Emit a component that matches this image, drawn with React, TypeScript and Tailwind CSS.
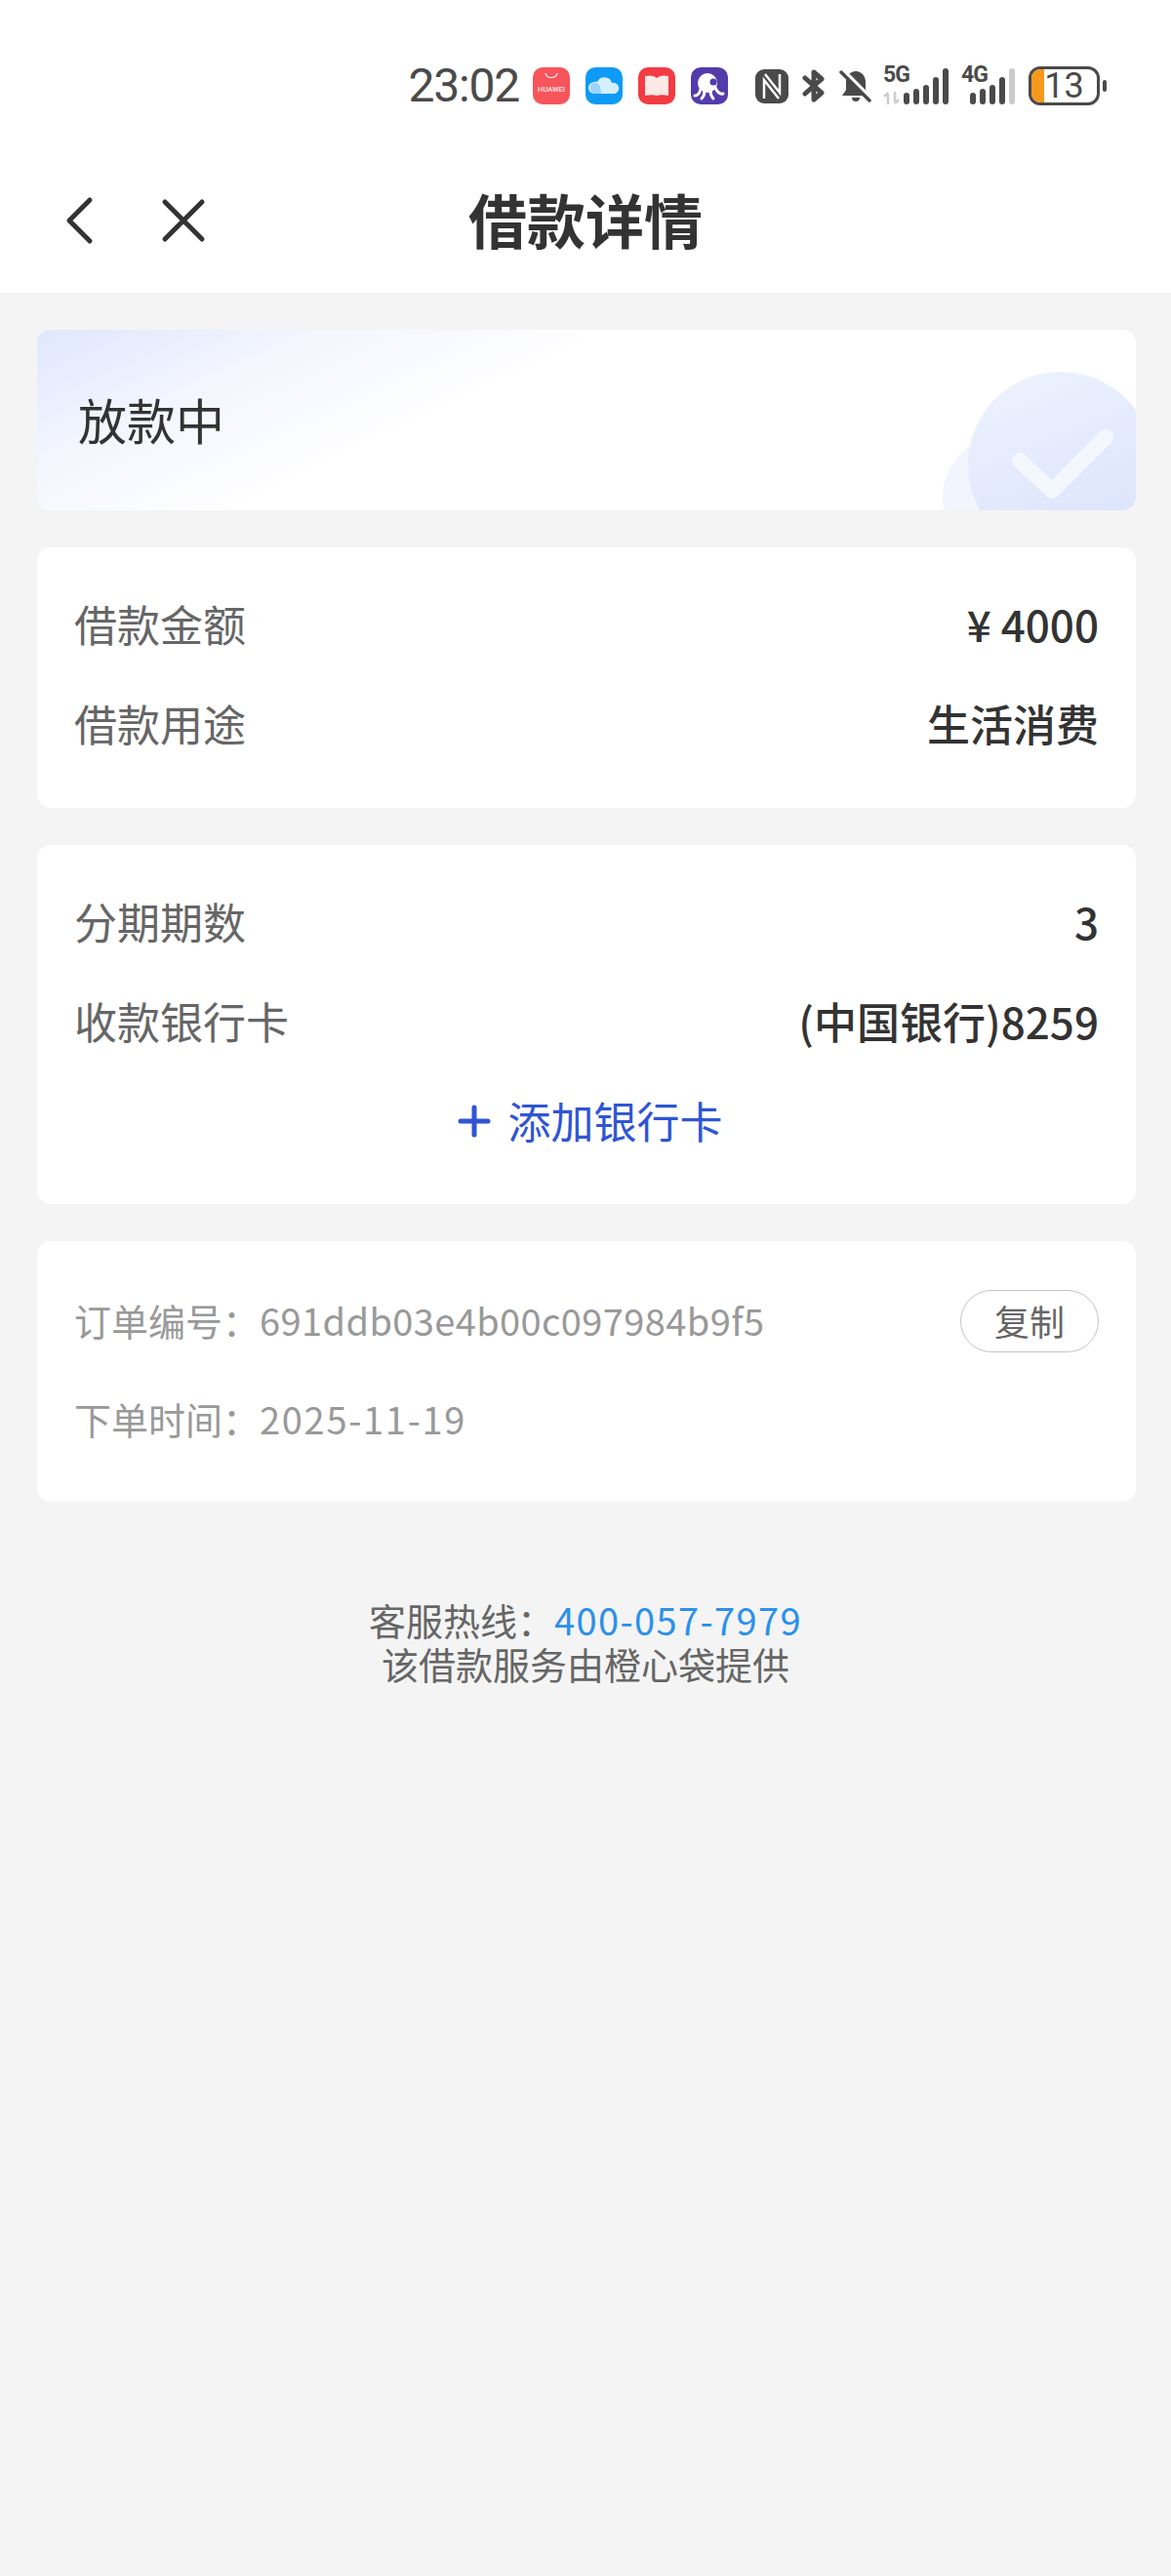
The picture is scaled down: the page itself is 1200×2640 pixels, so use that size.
import React from 'react'
import { Plus } from 'lucide-react'

const Row = ({ label, value, last }: { label: string; value: string; last?: boolean }) => (
  <div className={`flex items-center justify-between h-[61px] ${last ? '' : 'mb-[41px]'}`}>
    <span className="text-[44px] leading-[61px] text-[#666666]">{label}</span>
    <span className="text-[44px] leading-[61px] font-medium text-[#333333]">{value}</span>
  </div>
)

const Signal = ({ label, width, dim, arrows }: { label: string; width: string; dim?: boolean; arrows?: boolean }) => (
  <div className={`relative h-[38px] ${width}`}>
    <span className="absolute left-0 top-[-4px] text-[23px] leading-[24px] font-bold tracking-[-1px] font-['Roboto',sans-serif]">{label}</span>
    {arrows && (
      <svg className="absolute left-0 bottom-0" width="18" height="13" viewBox="0 0 18 13" fill="none" stroke="#cccccc" strokeWidth="2.5">
        <path d="M5 13V2M1 5l4-4" />
        <path d="M12 0v11M16 8l-4 4" />
      </svg>
    )}
    <div className="absolute right-0 bottom-0 flex items-end gap-[4px]">
      <i className="w-[6px] h-[12px] rounded-[3px] bg-[#4a4a4a]" />
      <i className="w-[6px] h-[16px] rounded-[3px] bg-[#4a4a4a]" />
      <i className="w-[6px] h-[20px] rounded-[3px] bg-[#4a4a4a]" />
      <i className="w-[6px] h-[28px] rounded-[3px] bg-[#4a4a4a]" />
      <i className={`w-[6px] h-[37px] rounded-[3px] ${dim ? 'bg-[#cccccc]' : 'bg-[#4a4a4a]'}`} />
    </div>
  </div>
)

const StatusBar = () => (
  <div className="h-[170px] pt-[69px] pr-[66px] flex justify-end items-start">
    <div className="flex items-center h-[38px] text-[#4a4a4a]">
      <span className="text-[48px] leading-[38px] tracking-[-1.2px] font-['Roboto',sans-serif]">23:02</span>
      {/* app notification icons */}
      <svg width="38" height="38" viewBox="0 0 38 38" className="ml-[14px]">
        <rect width="38" height="38" rx="10" fill="#f8545c" />
        <path d="M13 6c1 6 11 6 12 0" fill="none" stroke="#fff" strokeWidth="1.2" />
        <text x="19" y="25" textAnchor="middle" fontSize="7.5" fontWeight="500" fill="#ffe9e9" fontFamily="Roboto, sans-serif">HUAWEI</text>
      </svg>
      <svg width="38" height="38" viewBox="0 0 38 38" className="ml-[16px]">
        <rect width="38" height="38" rx="10" fill="#0f9bf5" />
        <path d="M9 27a6 6 0 0 1 0-12 3 3 0 0 1 3 0 8 8 0 0 1 15 1 5.5 5.5 0 0 1 3 11z" fill="#d4efff" />
        <path d="M9 27a6 6 0 0 1-1-11c3-1 6 1 7 4l1 7z" fill="#9bd4fb" />
      </svg>
      <svg width="38" height="38" viewBox="0 0 38 38" className="ml-[16px]">
        <rect width="38" height="38" rx="10" fill="#f23b42" />
        <path d="M7 9c4-1 9-1 12 2 3-3 8-3 12-2v20c-4-1-9-1-12 0-3-1-8-1-12 0z" fill="#fde8e6" />
      </svg>
      <svg width="38" height="38" viewBox="0 0 38 38" className="ml-[16px]">
        <rect width="38" height="38" rx="10" fill="#533bac" />
        <circle cx="17" cy="16" r="10" fill="#fff" />
        <path d="M10 22c-1 5-3 7-6 7M14 24c0 4-1 6-3 8M20 24c0 4 1 6 3 8M25 21c2 4 4 7 8 6" fill="none" stroke="#fff" strokeWidth="3" strokeLinecap="round" />
        <circle cx="23" cy="15" r="3.5" fill="#533bac" />
      </svg>
      {/* system icons */}
      <svg width="34" height="35" viewBox="0 0 34 35" className="ml-[28px]">
        <rect width="34" height="35" rx="9" fill="#4a4a4a" />
        <path d="M10 5l15 19V5M24 30L9 11v19" fill="none" stroke="#fff" strokeWidth="2.5" />
      </svg>
      <svg width="24" height="36" viewBox="0 0 24 36" className="ml-[14px]" fill="none" stroke="#4a4a4a" strokeWidth="5" strokeLinecap="round" strokeLinejoin="round">
        <path d="M3 10l17 15-8 7V22M12 14V4l8 7L3 26" />
      </svg>
      <svg width="33" height="35" viewBox="0 0 33 35" className="ml-[14px]">
        <path d="M17 2c6 0 10 5 10 11v8l4 6H3l4-6v-8c0-6 4-11 10-11z" fill="#4a4a4a" />
        <path d="M13 29a4 4 0 0 0 8 0z" fill="#4a4a4a" />
        <path d="M3 0l30 30" stroke="#fff" strokeWidth="4" />
        <path d="M2 3l29 29" stroke="#4a4a4a" strokeWidth="3.5" strokeLinecap="round" />
      </svg>
      <div className="ml-[12px]"><Signal label="5G" width="w-[67px]" arrows /></div>
      <div className="ml-[13px]"><Signal label="4G" width="w-[55px]" dim /></div>
      <div className="relative w-[73px] h-[40px] ml-[14px] rounded-[12px] border-[3px] border-[#4a4a4a] flex items-center justify-center">
        <div className="absolute left-0 top-0 bottom-0 w-[13px] rounded-l-[9px] bg-[#f7981d]" />
        <span className="relative text-[36px] leading-[34px] font-['Roboto',sans-serif]">13</span>
      </div>
      <div className="w-[4px] h-[12px] ml-[3px] rounded-full bg-[#4a4a4a]" />
    </div>
  </div>
)

export default function App() {
  return (
    <div className="w-[1200px] h-[2640px] bg-[#f4f4f4] font-['Noto_Sans_CJK_SC','Noto_Sans',sans-serif]">
      <div className="bg-white h-[300px]">
        <StatusBar />
        <div className="relative h-[130px] flex items-center justify-center pb-[22px]">
          <div className="absolute left-[64px] top-[30px] flex items-center gap-[65px] text-[#333333]">
            <svg width="36" height="52" viewBox="0 0 36 52" fill="none" stroke="currentColor" strokeWidth="5" strokeLinecap="round" strokeLinejoin="round">
              <path d="M28 5L7 26l21 21" />
            </svg>
            <svg width="46" height="46" viewBox="0 0 46 46" fill="none" stroke="currentColor" strokeWidth="5" strokeLinecap="round">
              <path d="M4 4l38 38M42 4L4 42" />
            </svg>
          </div>
          <h1 className="text-[60px] leading-[80px] font-bold text-[#333333]">借款详情</h1>
        </div>
      </div>

      <div className="pl-[38px] pr-[36px] pt-[38px] flex flex-col gap-[38px]">
        <div className="relative h-[185px] rounded-[14px] overflow-hidden bg-white flex items-center pl-[42px] pb-[3px]">
          <div className="absolute inset-0 bg-[linear-gradient(155deg,#dfe7fd_0%,#f4f6ff_20%,#ffffff_40%)]" />
          <svg className="absolute right-0 top-0" width="240" height="185" viewBox="0 0 240 185">
            <defs>
              <linearGradient id="ball" x1="0" y1="0" x2="0.4" y2="1">
                <stop offset="0" stopColor="#eff3fe" />
                <stop offset="1" stopColor="#dce4fc" />
              </linearGradient>
            </defs>
            <circle cx="106" cy="172" r="64" fill="#f2f4fe" />
            <circle cx="163" cy="138" r="95" fill="url(#ball)" />
            <path d="M121 134l33 31 55-55" fill="none" stroke="#f5f7fe" strokeWidth="16" strokeLinecap="round" strokeLinejoin="round" />
          </svg>
          <span className="relative text-[50px] leading-[70px] text-[#333333]">放款中</span>
        </div>

        <div className="h-[267px] rounded-[14px] bg-white px-[38px] pt-[48px]">
          <Row label="借款金额" value="¥ 4000" />
          <Row label="借款用途" value="生活消费" last />
        </div>

        <div className="h-[368px] rounded-[14px] bg-white px-[38px] pt-[48px]">
          <Row label="分期期数" value="3" />
          <Row label="收款银行卡" value="(中国银行)8259" />
          <div className="flex items-center justify-center h-[61px] text-[#2f55d4]">
            <Plus size={48} strokeWidth={2.5} />
            <span className="ml-[11px] text-[44px] leading-[61px]">添加银行卡</span>
          </div>
        </div>

        <div className="h-[267px] rounded-[14px] bg-white px-[38px] pt-[50px] text-[38px] leading-[64px] text-[#999999]">
          <div className="flex items-center justify-between h-[64px]">
            <span className="mt-[-2px]">订单编号：<span className="tracking-[0.4px]">691ddb03e4b00c097984b9f5</span></span>
            <span className="w-[142px] h-[64px] rounded-full border border-[#c4c4c4] text-[#666666] text-[36px] leading-[60px] text-center">复制</span>
          </div>
          <div className="mt-[36px]">下单时间：<span className="tracking-[1.7px]">2025-11-19</span></div>
        </div>
      </div>

      <div className="mt-[98px] text-center text-[38px] leading-[45px] text-[#666666]">
        <div>客服热线：<span className="text-[#2b90ea] tracking-[1.4px]">400-057-7979</span></div>
        <div>该借款服务由橙心袋提供</div>
      </div>
    </div>
  )
}
